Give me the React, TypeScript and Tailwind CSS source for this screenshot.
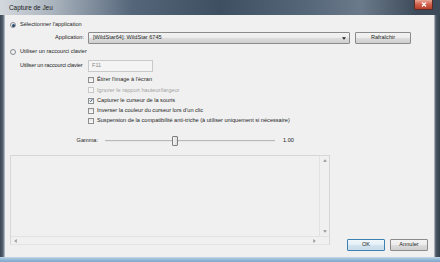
import React from "react";

function Radio({ checked }: { checked?: boolean }) {
  return (
    <div className="w-[6px] h-[6px] rounded-full border border-[#8a8f96] bg-[radial-gradient(circle,#ffffff_0%,#dcdcdc_100%)] flex items-center justify-center shrink-0">
      {checked && <div className="w-[3px] h-[3px] rounded-full bg-[#22476a]" />}
    </div>
  );
}

function Check({ checked, disabled }: { checked?: boolean; disabled?: boolean }) {
  return (
    <div
      className={
        "w-[6px] h-[6px] border shrink-0 flex items-center justify-center " +
        (disabled
          ? "border-[#c8c8c8] bg-[#f4f4f4]"
          : "border-[#8e8f8f] bg-[linear-gradient(180deg,#e6e6e6,#fbfbfb)]")
      }
    >
      {checked && (
        <svg width="5" height="5" viewBox="0 0 10 10">
          <path d="M1.5 5.5 L4 8 L8.5 1.5" stroke="#2a4d7a" strokeWidth="2" fill="none" />
        </svg>
      )}
    </div>
  );
}

function CheckRow({ label, checked, disabled }: { label: string; checked?: boolean; disabled?: boolean }) {
  return (
    <div className="h-[10.25px] flex items-center pl-[83px]">
      <Check checked={checked} disabled={disabled} />
      <span className={"ml-[3px] whitespace-nowrap " + (disabled ? "text-[#a3a3a3]" : "text-[#1e1e1e]")}>{label}</span>
    </div>
  );
}

export default function App() {
  return (
    <div
      className="w-[440px] h-[262px] flex flex-col overflow-hidden bg-[#45525f] text-[5.6px] leading-none"
      style={{ fontFamily: '"Liberation Sans", Arial, sans-serif' }}
    >
      {/* title bar */}
      <div className="h-[15px] flex items-start bg-[linear-gradient(90deg,#d3d8dd_0%,#aab4be_12%,#55667a_30%,#3e4f61_50%,#56677a_70%,#6b7a8a_82%,#3c4a59_95%)]">
        <span className="ml-[9px] mt-[4.5px] text-[6.4px] text-[#1a1a1a] whitespace-nowrap">Capture de Jeu</span>
        <div className="ml-auto mr-[7px] w-[19px] h-[10px] rounded-b-[2px] border border-t-0 border-[#5a2a24] bg-[linear-gradient(180deg,#e9a696_0%,#d0604a_50%,#b8402c_100%)] flex items-center justify-center">
          <svg width="6" height="5" viewBox="0 0 12 10">
            <path d="M2 1 L10 9 M10 1 L2 9" stroke="#ffffff" strokeWidth="2.4" />
          </svg>
        </div>
      </div>
      <div className="flex-1 flex">
        <div className="w-[5px] bg-[linear-gradient(90deg,#3c4754_0%,#55626f_60%,#c9d0d6_100%)]" />
        <div className="flex-1 bg-[#f0f0f0] flex flex-col">
          {/* radio 1 */}
          <div className="mt-[6px] h-[8px] flex items-center pl-[5px]">
            <Radio checked />
            <span className="ml-[4px] text-[#1e1e1e]">Sélectionner l'application</span>
          </div>
          {/* application row */}
          <div className="mt-[3px] h-[12px] flex items-center">
            <span className="w-[79px] text-right text-[#1e1e1e]">Application:</span>
            <div className="ml-[4px] w-[262px] h-[12px] rounded-[1px] border border-[#8b8b8b] bg-[linear-gradient(180deg,#f3f3f3_0%,#ebebeb_50%,#dddddd_51%,#cfcfcf_100%)] flex items-center pl-[4px] pr-[3px]">
              <span className="text-[#1e1e1e] whitespace-nowrap">[WildStar64]: WildStar 6745</span>
              <svg className="ml-auto" width="4" height="3" viewBox="0 0 8 5">
                <path d="M0 0 L8 0 L4 5 Z" fill="#222" />
              </svg>
            </div>
            <div className="ml-[5px] w-[56px] h-[12px] rounded-[1px] border border-[#8b8b8b] bg-[linear-gradient(180deg,#f3f3f3_0%,#ebebeb_50%,#dddddd_51%,#cfcfcf_100%)] flex items-center justify-center text-[#1e1e1e]">
              Rafraîchir
            </div>
          </div>
          {/* radio 2 */}
          <div className="mt-[4px] h-[8px] flex items-center pl-[5px]">
            <Radio />
            <span className="ml-[4px] text-[#1e1e1e]">Utiliser un raccourci clavier</span>
          </div>
          {/* hotkey row */}
          <div className="mt-[4px] h-[12px] flex items-center">
            <span className="w-[83px] shrink-0 pl-[15px] text-[#1e1e1e] whitespace-nowrap tracking-[-0.15px]">Utiliser un raccourci clavier</span>
            <div className="w-[65px] h-[12px] border border-[#c9c9c9] bg-[#f4f4f4] flex items-center pl-[3px] text-[#8a8a8a]">F11</div>
          </div>
          {/* checkboxes */}
          <div className="mt-[3px] flex flex-col">
            <CheckRow label="Étirer l'image à l'écran" />
            <CheckRow label="Ignorer le rapport hauteur/largeur" disabled />
            <CheckRow label="Capturer le curseur de la souris" checked />
            <CheckRow label="Inverser la couleur du curseur lors d'un clic" />
            <CheckRow label="Suspension de la compatibilité anti-triche (à utiliser uniquement si nécessaire)" />
          </div>
          {/* gamma */}
          <div className="mt-[8.75px] h-[12px] flex items-center">
            <span className="w-[93px] text-right text-[#1e1e1e]">Gamma:</span>
            <div className="ml-[7px] w-[170px] h-[12px] flex items-center relative">
              <div className="w-full h-[2px] border-t border-[#b9b9b9] bg-[#e6e6e6]" />
              <div className="absolute left-[67px] top-[1px] w-[6px] h-[10px] rounded-[1px] border border-[#7e7e7e] bg-[linear-gradient(90deg,#f6f6f6,#dcdcdc)]" />
            </div>
            <span className="ml-[8px] text-[#1e1e1e]">1.00</span>
          </div>
          {/* bottom */}
          <div className="mt-[8px] flex-1 flex">
            <div className="ml-[5px] w-[320px] h-[90px] border border-[#d6d6d6] border-b-[#e4e4e4] bg-[#f0f0f0] flex flex-col">
              <div className="flex-1 flex">
                <div className="flex-1" />
                <div className="w-[10px] border-l border-[#e2e2e2] flex flex-col items-center justify-between py-[3px]">
                  <svg width="4" height="3" viewBox="0 0 8 5"><path d="M0 5 L8 5 L4 0 Z" fill="#9a9a9a" /></svg>
                  <svg width="4" height="3" viewBox="0 0 8 5"><path d="M0 0 L8 0 L4 5 Z" fill="#9a9a9a" /></svg>
                </div>
              </div>
              <div className="h-[8px] border-t border-[#e2e2e2] flex items-center justify-between pl-[3px] pr-[13px]">
                <svg width="3" height="4" viewBox="0 0 5 8"><path d="M5 0 L5 8 L0 4 Z" fill="#9a9a9a" /></svg>
                <svg width="3" height="4" viewBox="0 0 5 8"><path d="M0 0 L0 8 L5 4 Z" fill="#9a9a9a" /></svg>
              </div>
            </div>
            <div className="ml-[17px] self-end mb-[6px] flex gap-[5px]">
              <div className="w-[38px] h-[12px] rounded-[1px] border border-[#3c7fb1] bg-[linear-gradient(180deg,#f2f8fc_0%,#e3eef6_50%,#d4e4ef_51%,#c9dcea_100%)] flex items-center justify-center text-[#1e1e1e]">
                OK
              </div>
              <div className="w-[38px] h-[12px] rounded-[1px] border border-[#8b8b8b] bg-[linear-gradient(180deg,#f3f3f3_0%,#ebebeb_50%,#dddddd_51%,#cfcfcf_100%)] flex items-center justify-center text-[#1e1e1e]">
                Annuler
              </div>
            </div>
          </div>
        </div>
        <div className="w-[6px] bg-[linear-gradient(90deg,#c9d0d6_0%,#4b5866_30%,#33404d_100%)]" />
      </div>
      <div className="h-[5px] bg-[linear-gradient(180deg,#c8d8e8_0%,#9ebfdc_40%,#7fa6c9_100%)]" />
    </div>
  );
}
